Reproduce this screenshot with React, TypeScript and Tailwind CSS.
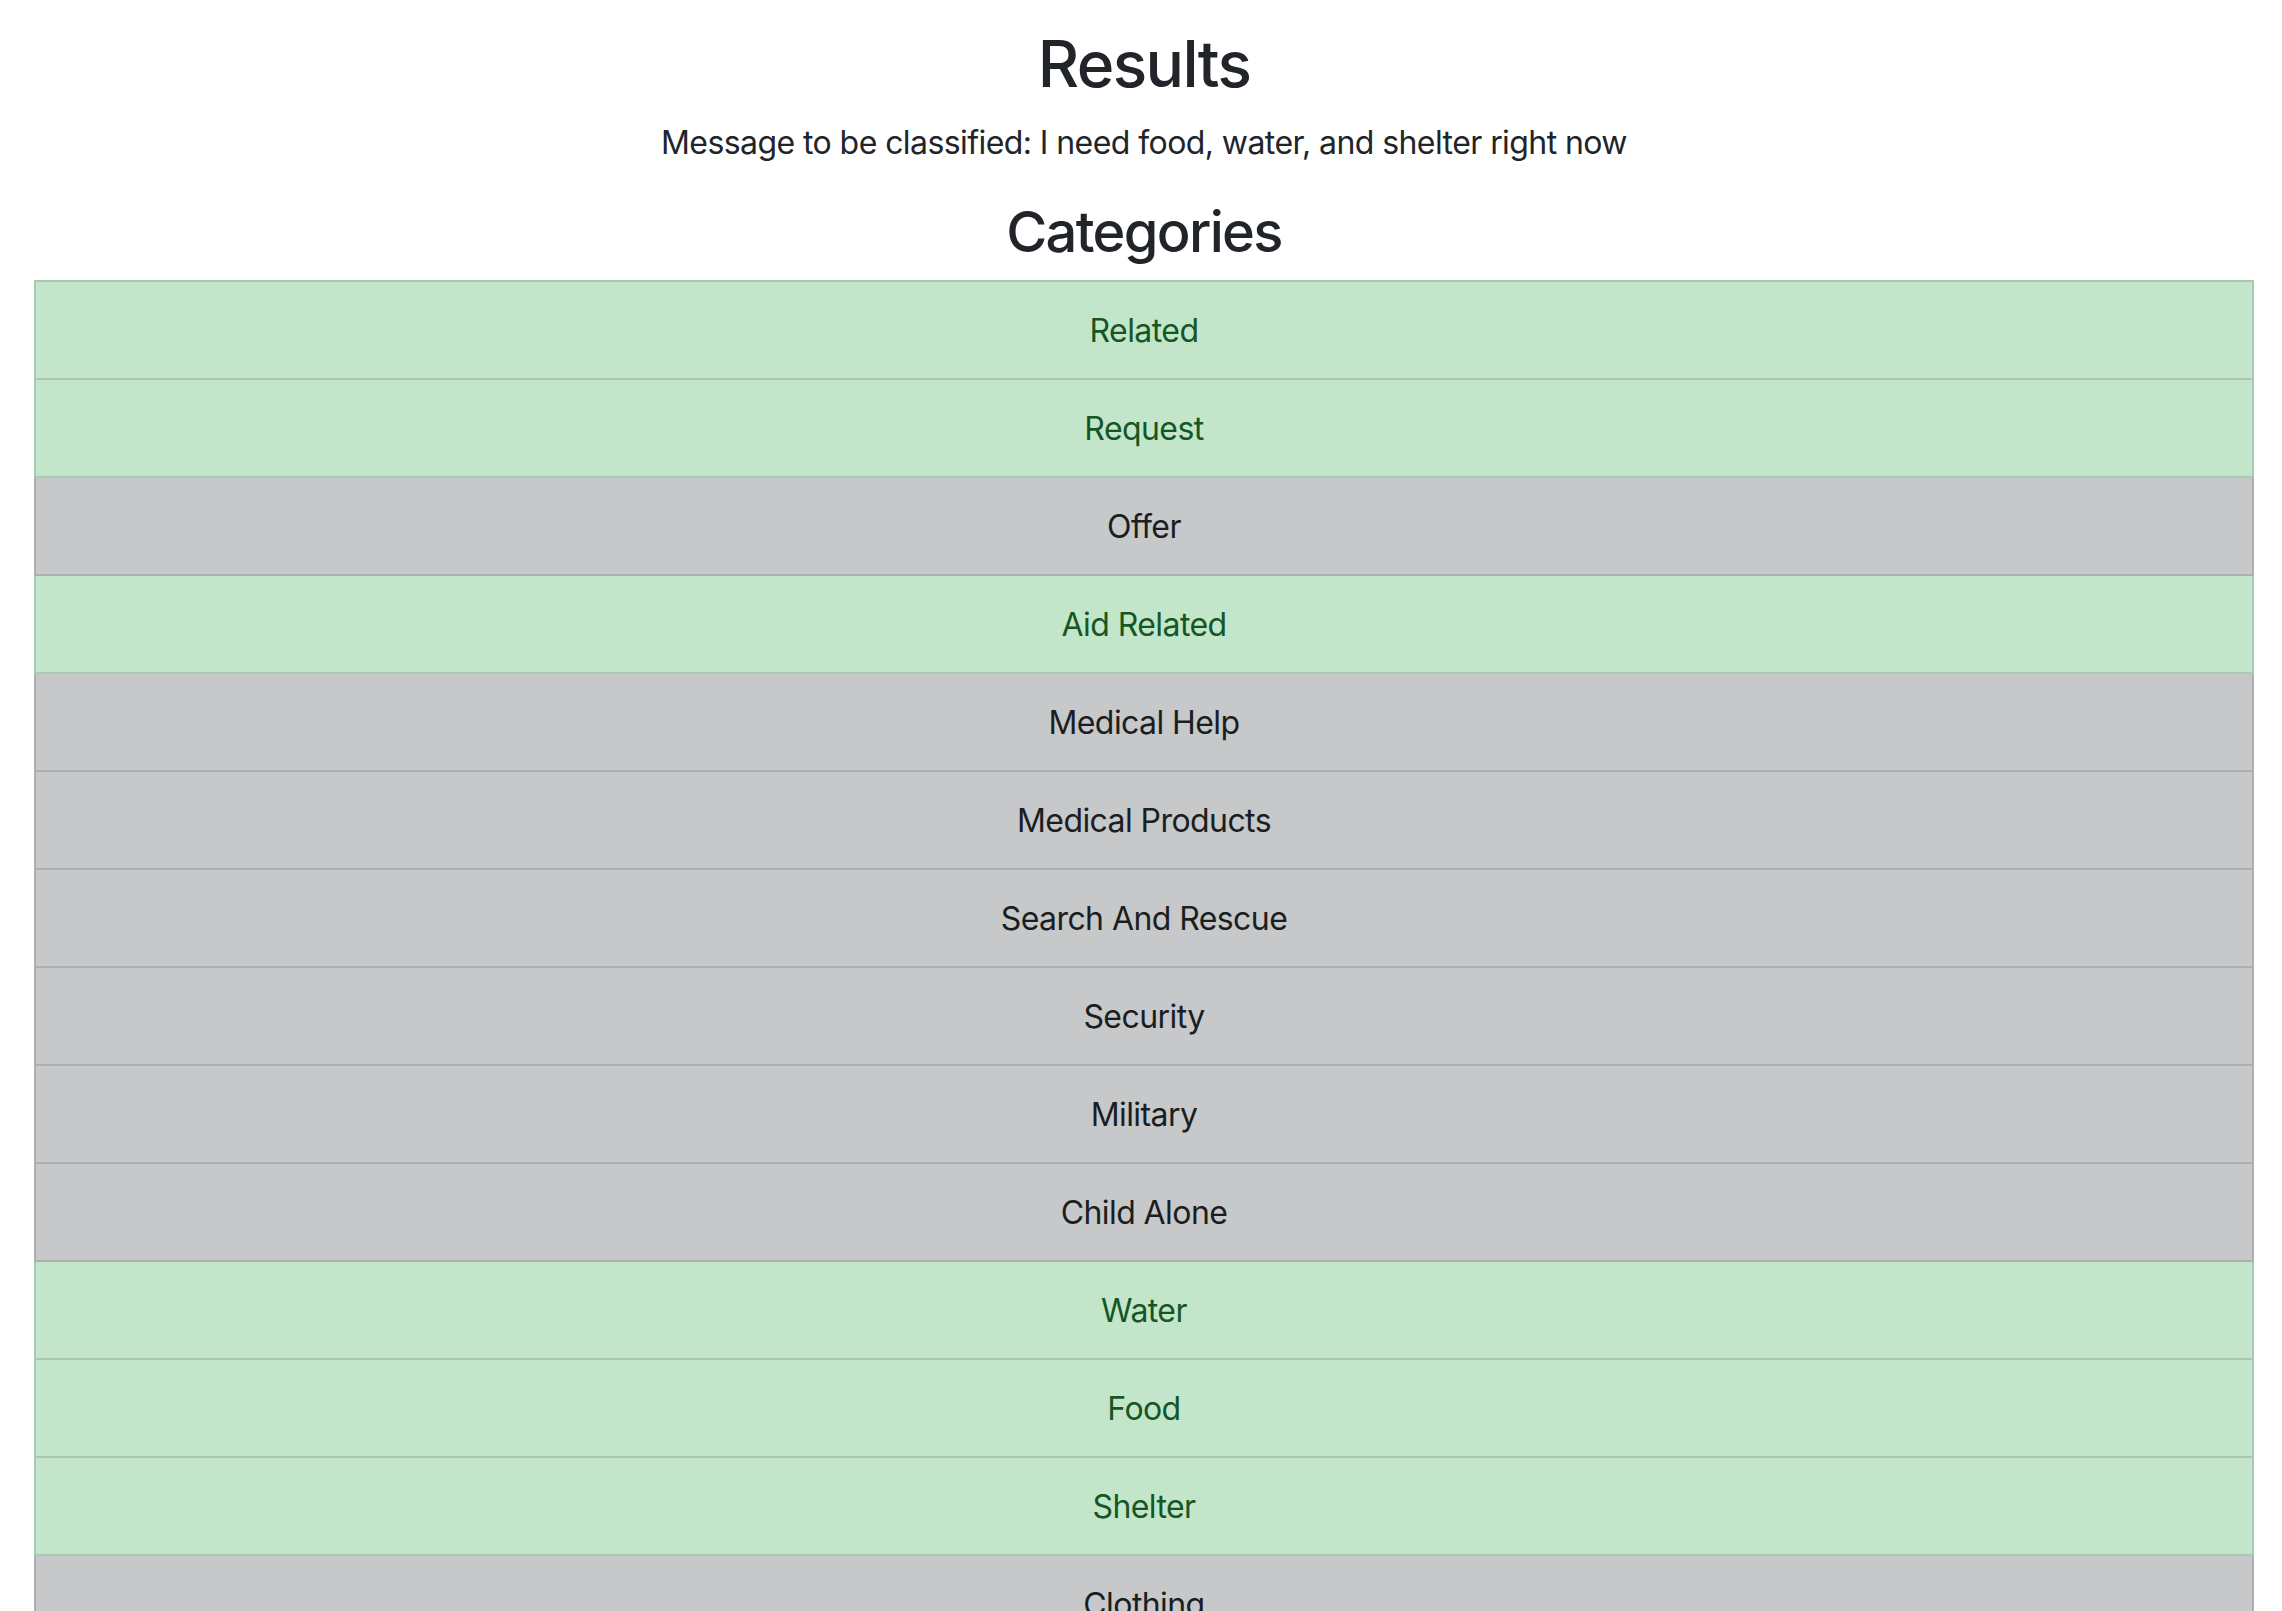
import React from "react";

const categories: { name: string; on: boolean }[] = [
  { name: "Related", on: true },
  { name: "Request", on: true },
  { name: "Offer", on: false },
  { name: "Aid Related", on: true },
  { name: "Medical Help", on: false },
  { name: "Medical Products", on: false },
  { name: "Search And Rescue", on: false },
  { name: "Security", on: false },
  { name: "Military", on: false },
  { name: "Child Alone", on: false },
  { name: "Water", on: true },
  { name: "Food", on: true },
  { name: "Shelter", on: true },
  { name: "Clothing", on: false },
  { name: "Money", on: false },
  { name: "Missing People", on: false },
  { name: "Refugees", on: false },
  { name: "Death", on: false },
  { name: "Other Aid", on: false },
  { name: "Infrastructure Related", on: false },
  { name: "Transport", on: false },
  { name: "Buildings", on: false },
  { name: "Electricity", on: false },
  { name: "Tools", on: false },
  { name: "Hospitals", on: false },
  { name: "Shops", on: false },
  { name: "Aid Centers", on: false },
  { name: "Other Infrastructure", on: false },
  { name: "Weather Related", on: false },
  { name: "Floods", on: false },
  { name: "Storm", on: false },
  { name: "Fire", on: false },
  { name: "Earthquake", on: false },
  { name: "Cold", on: false },
  { name: "Other Weather", on: false },
  { name: "Direct Report", on: false },
];

export default function App() {
  return (
    <div
      className="min-h-screen bg-white text-[#212529] pt-[26px] pl-[34px] pr-[28px] text-center"
      style={{ fontFamily: 'Inter, "Noto Sans", "Liberation Sans", sans-serif' }}
    >
      <h2 className="text-[64px] leading-[1.2] font-medium tracking-[-0.025em] mb-[16px]">Results</h2>
      <p className="text-[32px] leading-[48px] tracking-[-0.018em] mb-[32px]">
        Message to be classified: I need food, water, and shelter right now
      </p>
      <h3 className="text-[56px] leading-[1.2] font-medium tracking-[-0.03em] mb-[14px]">Categories</h3>
      <ul className="flex flex-col">
        {categories.map((c, i) => (
          <li
            key={c.name}
            className={
              (c.on ? "bg-[#c3e6cb] text-[#155724] " : "bg-[#c6c8ca] text-[#1b1e21] ") +
              (i === 0 ? "border-t-2 " : "border-t-0 ") +
              "border-x-2 border-b-2 border-[rgba(0,0,0,0.125)] px-[40px] pt-[25px] pb-[23px] text-[32px] leading-[48px] tracking-[-0.018em]"
            }
          >
            {c.name}
          </li>
        ))}
      </ul>
    </div>
  );
}
